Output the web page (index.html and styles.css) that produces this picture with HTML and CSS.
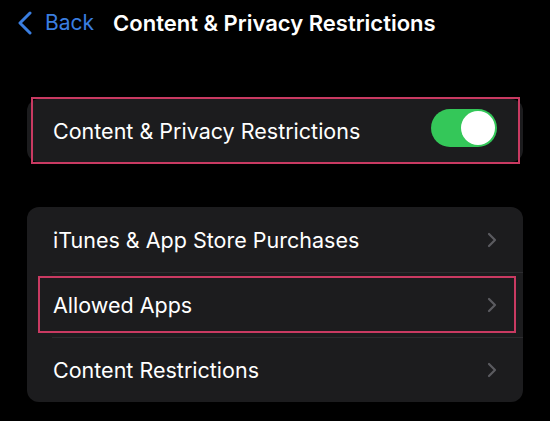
FILE: index.html
```html
<!DOCTYPE html>
<html lang="en">
<head>
    <meta charset="UTF-8">
    <meta name="viewport" content="width=device-width, initial-scale=1.0">
    <title>Content &amp; Privacy Restrictions</title>
    <link rel="stylesheet" href="styles.css">
</head>
<body>
    <header class="barra">
        <a class="volver" href="#">
            <svg class="flecha" width="16" height="24" viewBox="0 0 16 24">
                <path d="M13 2 L3 12 L13 22" fill="none" stroke="#3a7ee0" stroke-width="3" stroke-linecap="round" stroke-linejoin="round"/>
            </svg>
            <span>Back</span>
        </a>
        <h1 class="titulo">Content &amp; Privacy Restrictions</h1>
    </header>
    <main>
        <div class="grupo grupo_uno">
            <div class="fila marcada">
                <span class="texto">Content &amp; Privacy Restrictions</span>
                <span class="interruptor"><span class="bola"></span></span>
            </div>
        </div>
        <div class="grupo grupo_dos">
            <div class="fila">
                <span class="texto">iTunes &amp; App Store Purchases</span>
                <svg class="chevron" width="10" height="16" viewBox="0 0 10 16"><path d="M2 2 L8 8 L2 14" fill="none" stroke="#5b5b60" stroke-width="2.2" stroke-linecap="round" stroke-linejoin="round"/></svg>
            </div>
            <div class="fila linea marcada_dos">
                <span class="texto">Allowed Apps</span>
                <svg class="chevron" width="10" height="16" viewBox="0 0 10 16"><path d="M2 2 L8 8 L2 14" fill="none" stroke="#5b5b60" stroke-width="2.2" stroke-linecap="round" stroke-linejoin="round"/></svg>
            </div>
            <div class="fila linea">
                <span class="texto">Content Restrictions</span>
                <svg class="chevron" width="10" height="16" viewBox="0 0 10 16"><path d="M2 2 L8 8 L2 14" fill="none" stroke="#5b5b60" stroke-width="2.2" stroke-linecap="round" stroke-linejoin="round"/></svg>
            </div>
        </div>
    </main>
</body>
</html>
```

FILE: styles.css
```css
body{
    margin:0;
    background-color:#000;
    color:#fff;
    font-family:Inter, "Noto Sans", sans-serif;
    width:550px;
    height:421px;
    overflow:hidden;
}
.barra{
    display:flex;
    align-items:center;
    height:45px;
    padding-left:17px;
}
.volver{
    display:flex;
    align-items:center;
    gap:12px;
    color:#3a7ee0;
    text-decoration:none;
    font-size:21px;
}
.titulo{
    margin:0 0 0 19px;
    font-size:22px;
    font-weight:600;
}
.grupo{
    background-color:#1c1c1e;
    margin:0 27px;
    border-radius:12px;
}
.grupo_uno{
    margin-top:54px;
}
.grupo_dos{
    margin-top:45px;
}
.fila{
    position:relative;
    display:flex;
    align-items:center;
    justify-content:space-between;
    height:63px;
    padding:0 27px 0 26px;
    font-size:21.5px;
}
.grupo_dos .fila{
    height:65px;
}
.linea::before{
    content:"";
    position:absolute;
    left:25px;
    right:0;
    top:0;
    border-top:1px solid #2c2c2f;
}
.marcada::after{
    content:"";
    position:absolute;
    left:4px;
    right:3px;
    top:-2px;
    bottom:-2px;
    border:2px solid #c93a62;
}
.marcada_dos::after{
    content:"";
    position:absolute;
    left:11px;
    right:7px;
    top:4px;
    bottom:4px;
    border:2px solid #c93a62;
}
.interruptor{
    display:flex;
    justify-content:flex-end;
    align-items:center;
    width:66px;
    height:38px;
    border-radius:19px;
    background-color:#34c759;
    margin-top:-6px;
    margin-right:-1px;
    padding:0 2px;
    box-sizing:border-box;
}
.bola{
    width:34px;
    height:34px;
    border-radius:50%;
    background-color:#fff;
}
.chevron{
    margin-right:-1px;
}
```
